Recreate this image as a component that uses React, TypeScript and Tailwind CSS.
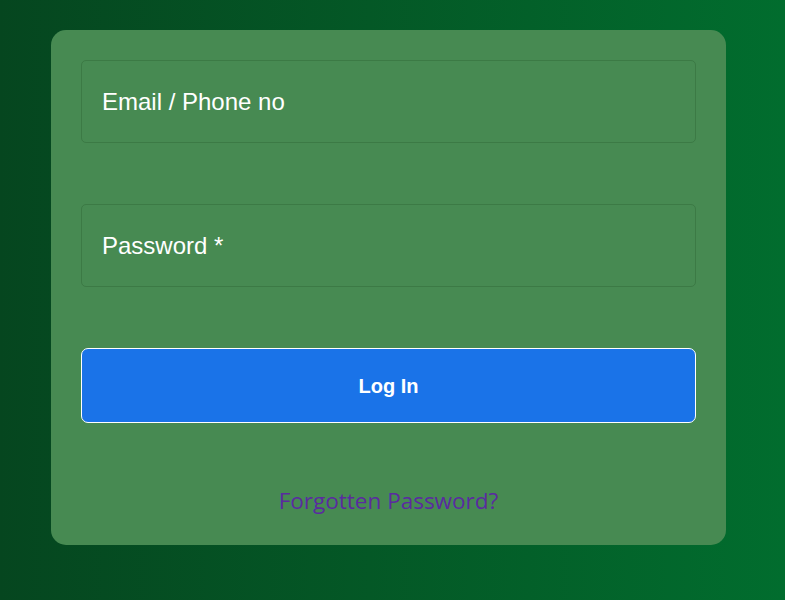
export default function App() {
  return (
    <div className="min-h-screen w-full bg-gradient-to-r from-[#05461f] to-[#016d2e] pt-[30px] font-['Liberation_Sans',Arial,sans-serif]">
      <div className="mx-[51px] w-[675px] rounded-[15px] bg-[#478a52] px-[30px] pt-[30px] pb-[29px]">
        <div className="flex flex-col gap-[61px]">
          <div className="flex h-[83px] items-center rounded-[5px] border border-[#3c7a45] px-[20px] text-[24px] text-white">
            Email / Phone no
          </div>
          <div className="flex h-[83px] items-center rounded-[5px] border border-[#3c7a45] px-[20px] text-[24px] text-white">
            Password *
          </div>
          <button className="h-[75px] w-full rounded-[7px] border border-white bg-[#1a73e8] text-[20px] font-bold text-white">
            Log In
          </button>
        </div>
        <div className="mt-[63px] text-center font-['Open_Sans',sans-serif] text-[22.5px] leading-[30px] text-[#5a2ba0]">
          Forgotten Password?
        </div>
      </div>
    </div>
  );
}
